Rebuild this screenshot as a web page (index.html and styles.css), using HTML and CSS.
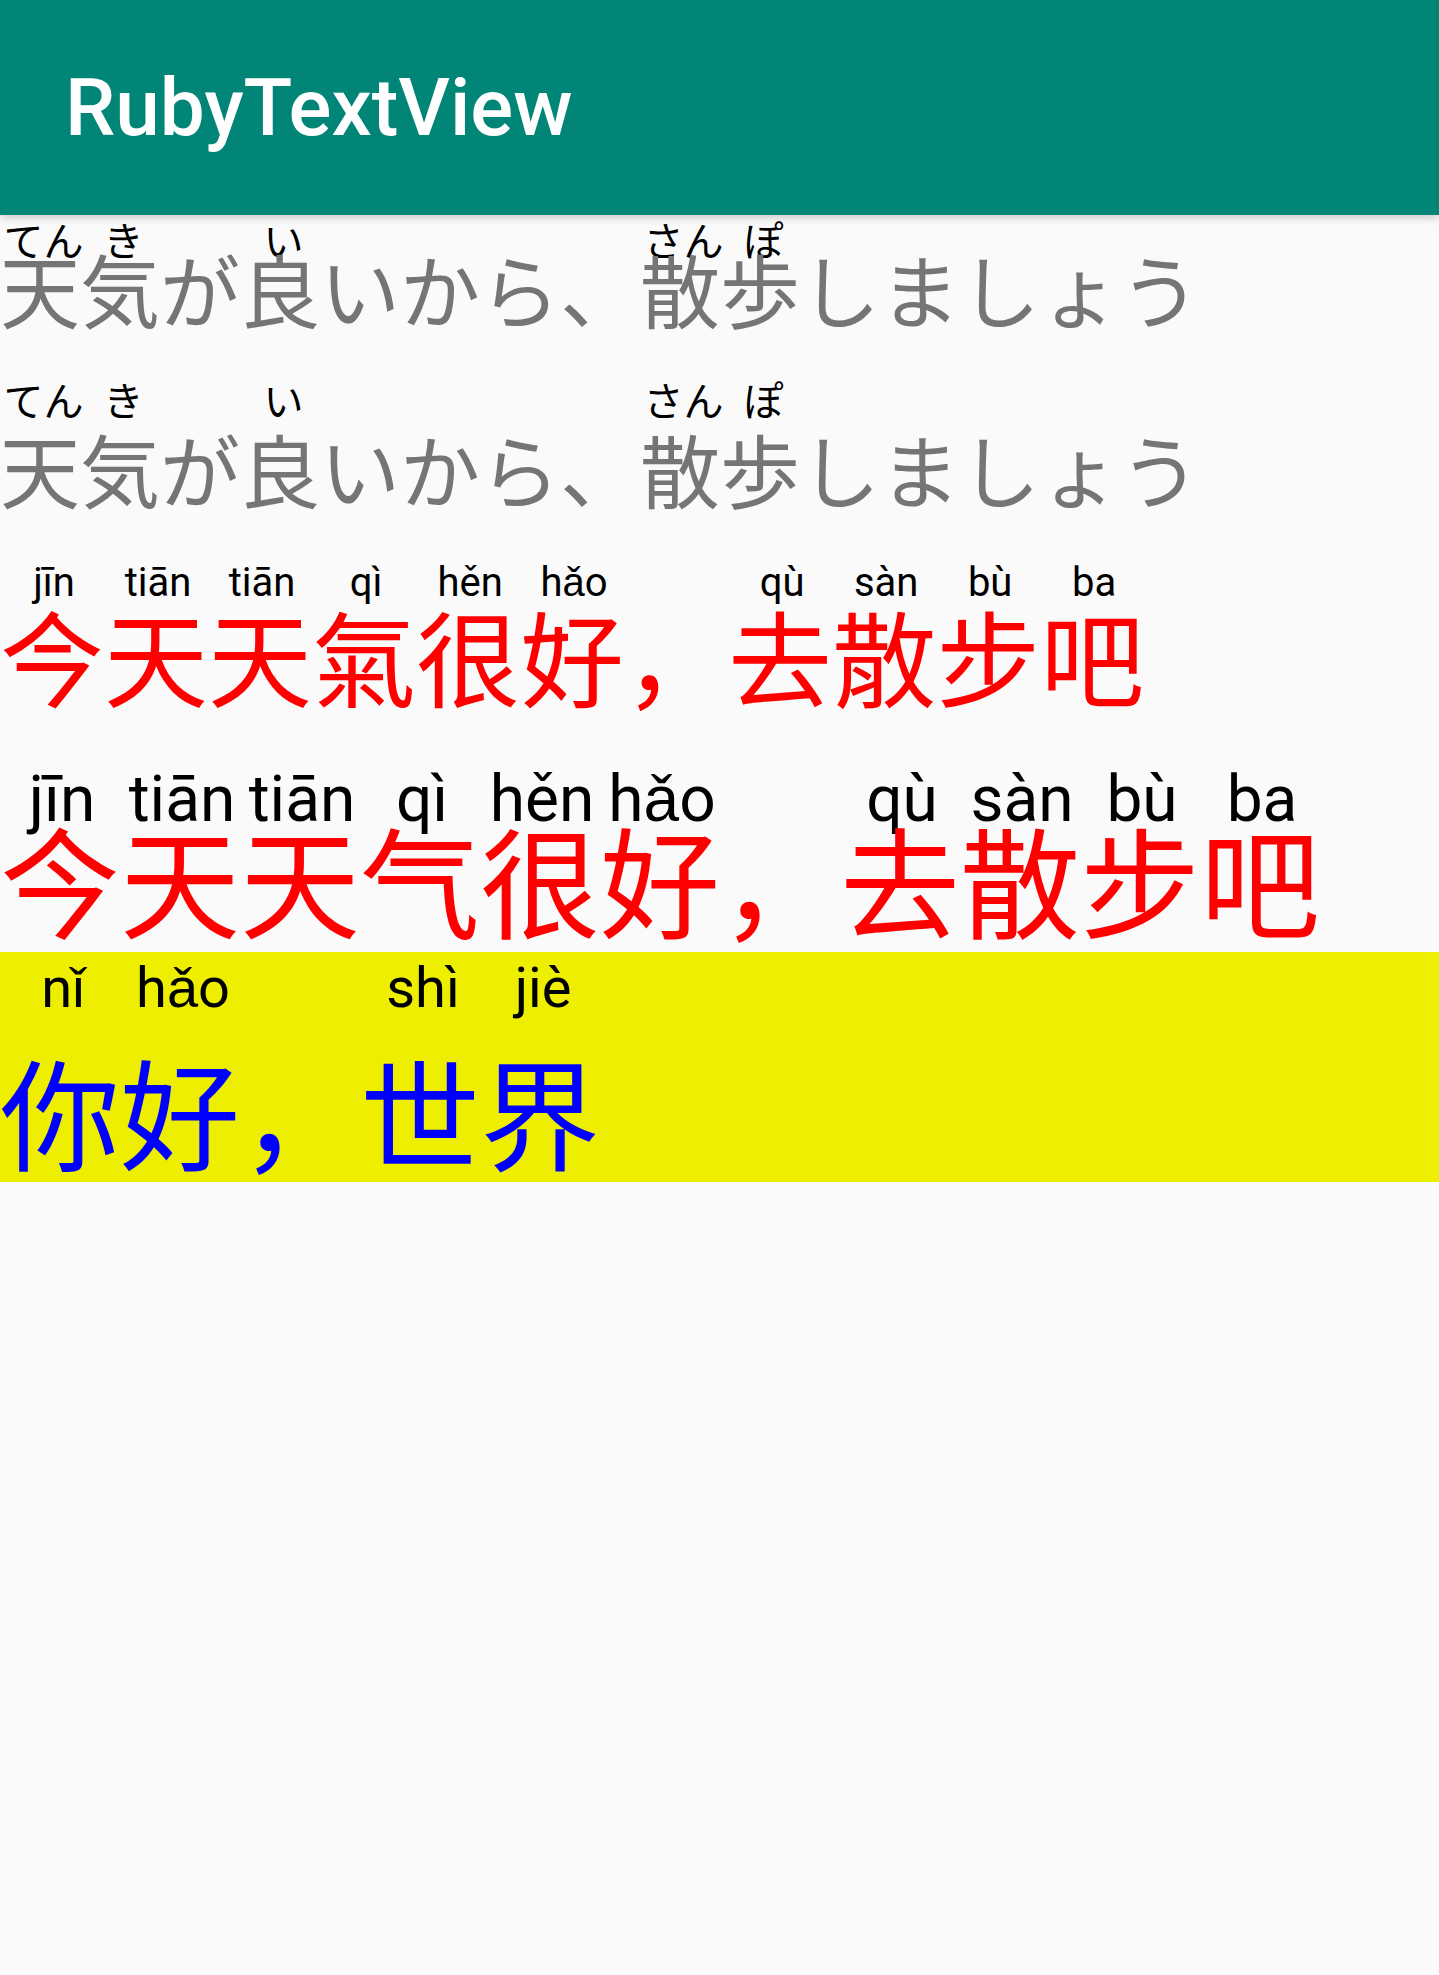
FILE: index.html
```html
<!DOCTYPE html>
<html lang="ja">
<head>
<meta charset="utf-8">
<title>RubyTextView</title>
<link rel="stylesheet" href="styles.css">
</head>
<body>
<header class="appbar">
  <h1 class="title">RubyTextView</h1>
</header>
<main class="content">
  <p class="line ja row1">
    <span class="u"><span class="rt"><span>てん</span></span><span class="rb">天</span></span><span class="u"><span class="rt"><span>き</span></span><span class="rb">気</span></span><span class="u"><span class="rb">が</span></span><span class="u"><span class="rt"><span>い</span></span><span class="rb">良</span></span><span class="u"><span class="rb">いから、</span></span><span class="u"><span class="rt"><span>さん</span></span><span class="rb">散</span></span><span class="u"><span class="rt"><span>ぽ</span></span><span class="rb">歩</span></span><span class="u"><span class="rb">しましょう</span></span>
  </p>
  <p class="line ja row2">
    <span class="u"><span class="rt"><span>てん</span></span><span class="rb">天</span></span><span class="u"><span class="rt"><span>き</span></span><span class="rb">気</span></span><span class="u"><span class="rb">が</span></span><span class="u"><span class="rt"><span>い</span></span><span class="rb">良</span></span><span class="u"><span class="rb">いから、</span></span><span class="u"><span class="rt"><span>さん</span></span><span class="rb">散</span></span><span class="u"><span class="rt"><span>ぽ</span></span><span class="rb">歩</span></span><span class="u"><span class="rb">しましょう</span></span>
  </p>
  <p class="line zh row3" lang="zh-Hant">
    <span class="u"><span class="rt"><span>jīn</span></span><span class="rb">今</span></span><span class="u"><span class="rt"><span>tiān</span></span><span class="rb">天</span></span><span class="u"><span class="rt"><span>tiān</span></span><span class="rb">天</span></span><span class="u"><span class="rt"><span>qì</span></span><span class="rb">氣</span></span><span class="u"><span class="rt"><span>hěn</span></span><span class="rb">很</span></span><span class="u"><span class="rt"><span>hǎo</span></span><span class="rb">好</span></span><span class="u"><span class="rb">，</span></span><span class="u"><span class="rt"><span>qù</span></span><span class="rb">去</span></span><span class="u"><span class="rt"><span>sàn</span></span><span class="rb">散</span></span><span class="u"><span class="rt"><span>bù</span></span><span class="rb">步</span></span><span class="u"><span class="rt"><span>ba</span></span><span class="rb">吧</span></span>
  </p>
  <p class="line zh row4" lang="zh-Hans">
    <span class="u"><span class="rt"><span>jīn</span></span><span class="rb">今</span></span><span class="u"><span class="rt"><span>tiān</span></span><span class="rb">天</span></span><span class="u"><span class="rt"><span>tiān</span></span><span class="rb">天</span></span><span class="u"><span class="rt"><span>qì</span></span><span class="rb">气</span></span><span class="u"><span class="rt"><span>hěn</span></span><span class="rb">很</span></span><span class="u"><span class="rt"><span>hǎo</span></span><span class="rb">好</span></span><span class="u"><span class="rb">，</span></span><span class="u"><span class="rt"><span>qù</span></span><span class="rb">去</span></span><span class="u"><span class="rt"><span>sàn</span></span><span class="rb">散</span></span><span class="u"><span class="rt"><span>bù</span></span><span class="rb">步</span></span><span class="u"><span class="rt"><span>ba</span></span><span class="rb">吧</span></span>
  </p>
  <div class="band">
    <p class="line zh row5" lang="zh-Hans">
      <span class="u"><span class="rt"><span>nǐ</span></span><span class="rb">你</span></span><span class="u"><span class="rt"><span>hǎo</span></span><span class="rb">好</span></span><span class="u"><span class="rb">，</span></span><span class="u"><span class="rt"><span>shì</span></span><span class="rb">世</span></span><span class="u"><span class="rt"><span>jiè</span></span><span class="rb">界</span></span>
    </p>
  </div>
</main>
</body>
</html>
```

FILE: styles.css
```css
html, body {
  margin: 0;
  padding: 0;
}

body {
  background: #fafafa;
  font-family: "Noto Sans CJK JP", "Noto Sans", sans-serif;
}

.appbar {
  position: relative;
  z-index: 1;
  height: 215px;
  background: #008577;
  display: flex;
  align-items: center;
  padding-left: 65px;
  box-shadow: 0 3px 8px rgba(0, 0, 0, 0.18);
}

.title {
  margin: 0;
  font-family: "Roboto", "Liberation Sans", sans-serif;
  font-weight: 500;
  font-size: 80px;
  line-height: normal;
  color: #ffffff;
}

.content {
  display: flex;
  flex-direction: column;
}

.line {
  display: flex;
  align-items: flex-end;
  margin: 0;
}

.u {
  display: flex;
  flex-direction: column;
  align-items: center;
}

.rt {
  width: 0;
  display: flex;
  justify-content: center;
  white-space: nowrap;
  color: #000000;
}

.rt > span {
  padding-left: 4px;
}

.rb {
  display: block;
  white-space: nowrap;
}

/* Japanese rows */
.ja .rb {
  font-family: "Noto Sans CJK JP", sans-serif;
  font-size: 80px;
  line-height: 80px;
  height: 80px;
  color: #757575;
}

.ja .rt {
  font-family: "Noto Sans CJK JP", sans-serif;
  font-size: 40px;
  line-height: 40px;
  height: 40px;
}

.ja .rt > span {
  padding-left: 7px;
}

.row1 {
  margin-top: 4px;
}

.row1 .rt {
  margin-bottom: -12px;
}

.row2 {
  margin-top: 52px;
}

.row2 .rt {
  margin-bottom: 8px;
}

/* Chinese rows */
.zh .rb {
  font-family: "Noto Sans CJK SC", sans-serif;
  color: #ff0000;
}

.zh .rt {
  font-family: "Roboto", "Liberation Sans", sans-serif;
}

.row3 {
  margin-top: 56px;
}

.row3 .rb {
  font-size: 104px;
  line-height: 104px;
  height: 104px;
}

.row3 .rt {
  font-size: 40px;
  line-height: 40px;
  height: 40px;
  margin-bottom: 0;
}

.row4 {
  margin-top: 61px;
}

.row4 .rb {
  font-size: 120px;
  line-height: 120px;
  height: 120px;
}

.row4 .rt {
  font-size: 64px;
  line-height: 64px;
  height: 64px;
  margin-bottom: -14px;
}

.band {
  margin-top: 14px;
  background: #eeee00;
  padding: 8px 0 12px;
}

.row5 .rb {
  font-size: 120px;
  line-height: 120px;
  height: 120px;
  color: #0000ff;
}

.row5 .rt {
  font-size: 56px;
  line-height: 56px;
  height: 56px;
  margin-bottom: 34px;
}

.row5 .rt > span {
  padding-left: 6px;
}
```
